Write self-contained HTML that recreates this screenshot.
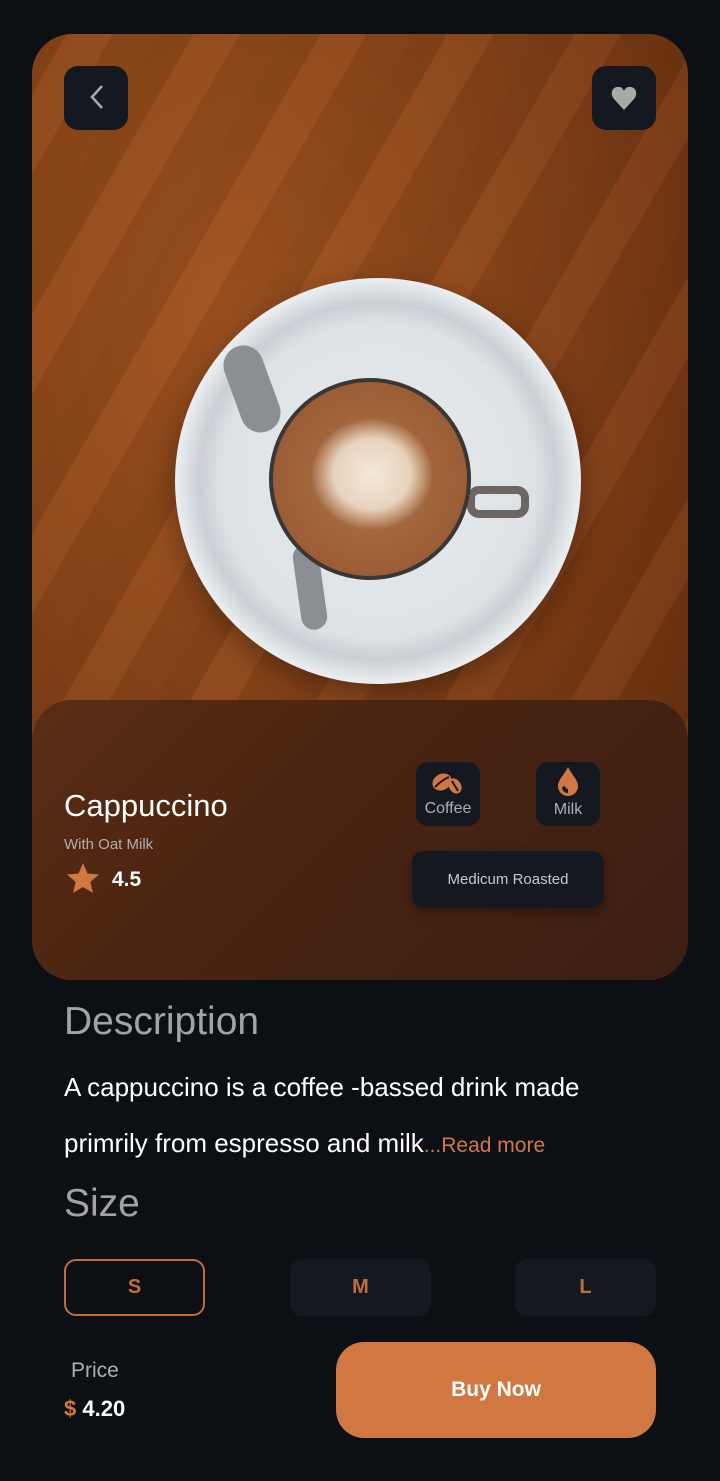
<!DOCTYPE html>
<html><head><meta charset="utf-8"><style>
*{margin:0;padding:0;box-sizing:border-box}
body{width:720px;height:1481px;background:#0c0f14;font-family:"Liberation Sans",sans-serif;position:relative;overflow:hidden;color:#fff}
.hero{position:absolute;left:32px;top:34px;width:656px;height:946px;border-radius:40px;overflow:hidden;
background:radial-gradient(ellipse at 30% 30%,#a0521f 0%,#8a4519 40%,#6e3311 80%,#5a2a10 100%)}
.streak{position:absolute;inset:0;background:repeating-linear-gradient(120deg,rgba(0,0,0,.07) 0 30px,rgba(255,170,110,.05) 30px 70px,rgba(0,0,0,.05) 70px 110px)}
.saucer{position:absolute;left:143px;top:244px;width:406px;height:406px;border-radius:50%;background:radial-gradient(circle at 50% 50%,#e8ecef 0%,#dde2e6 55%,#c9cfd4 62%,#e9edf0 70%,#d4d9dd 100%);box-shadow:0 10px 30px rgba(0,0,0,.35)}
.cup{position:absolute;left:237px;top:344px;width:202px;height:202px;border-radius:50%;background:#3a3633}
.coffee{position:absolute;left:241px;top:348px;width:194px;height:194px;border-radius:50%;background:radial-gradient(circle,#b07449 0%,#9a5d35 70%,#6e3f20 100%)}
.art{position:absolute;left:280px;top:385px;width:120px;height:110px;border-radius:50% 50% 45% 45%;background:radial-gradient(ellipse,#f3e8dc 0%,#e8d3bd 45%,rgba(200,150,110,0) 72%)}
.handle{position:absolute;left:435px;top:452px;width:62px;height:32px;border-radius:12px;border:8px solid #6b6661}
.spoon{position:absolute;background:#8b8f93;border-radius:30px}
.panel{position:absolute;left:0;top:666px;width:656px;height:280px;border-radius:40px;background:linear-gradient(135deg,#5b2d14 0%,#4a2412 40%,#3c1e12 100%)}
.btn{position:absolute;width:64px;height:64px;border-radius:14px;background:#141921;top:32px}
.chip{position:absolute;background:#141921;border-radius:12px;color:#aeaeae;font-size:16px;text-align:center}
.sz{position:absolute;top:1259px;width:141px;height:57px;border-radius:12px;background:#141921;color:#c26c38;font-size:20px;font-weight:bold;text-align:center;line-height:57px}
</style></head><body>
<div class="hero">
<div class="streak"></div>
<div class="saucer"></div>
<div class="spoon" style="left:200px;top:310px;width:40px;height:90px;transform:rotate(-20deg)"></div>
<div class="spoon" style="left:265px;top:510px;width:26px;height:86px;transform:rotate(-8deg)"></div>
<div class="handle"></div>
<div class="cup"></div>
<div class="coffee"></div>
<div class="art"></div>
<div class="btn" style="left:32px"><svg width="64" height="64"><path d="M38 20 L28 31 L38 42" stroke="#a9a9a9" stroke-width="2.5" fill="none"/></svg></div>
<div class="btn" style="left:560px"><svg width="64" height="64"><path d="M32 44 L22 33 C17 27 21 20 27 21 C30 21 31 23 32 25 C33 23 34 21 37 21 C43 20 47 27 42 33 Z" fill="#a9a9a9"/></svg></div>
<div class="panel">
<div style="position:absolute;left:32px;top:88px;font-size:31px">Cappuccino</div>
<div style="position:absolute;left:32px;top:136px;font-size:15px;color:#aeaeae">With Oat Milk</div>
<svg style="position:absolute;left:34px;top:162px" width="34" height="32"><path d="M17 1 L21.5 11.5 L33 12.5 L24.3 20 L27 31 L17 25 L7 31 L9.7 20 L1 12.5 L12.5 11.5Z" fill="#d17842"/></svg>
<div style="position:absolute;left:80px;top:168px;font-size:21px;font-weight:bold">4.5</div>
<div class="chip" style="left:384px;top:62px;width:64px;height:64px"><svg width="40" height="28" style="margin-top:6px"><ellipse cx="14" cy="14" rx="10" ry="8" fill="#d17842" transform="rotate(-30 14 14)"/><path d="M7 19 Q14 12 21 9" stroke="#141921" stroke-width="2" fill="none"/><ellipse cx="27" cy="18" rx="6" ry="8" fill="#d17842" transform="rotate(-30 27 18)"/><path d="M24 13 Q27 18 30 23" stroke="#141921" stroke-width="2" fill="none"/></svg><div style="margin-top:-1px">Coffee</div></div>
<div class="chip" style="left:504px;top:62px;width:64px;height:64px"><svg width="40" height="32" style="margin-top:3px"><path d="M20 2 C16 10 10 15 10 21 A10 10 0 0 0 30 21 C30 15 24 10 20 2Z" fill="#d17842"/><path d="M14 22 A6 6 0 0 0 20 28 L20 24 A3 3 0 0 1 17 21Z" fill="#141921"/></svg><div style="margin-top:-1px">Milk</div></div>
<div class="chip" style="left:380px;top:151px;width:192px;height:57px;line-height:57px;font-size:15px;color:#c8c8c8;box-shadow:0 4px 10px rgba(0,0,0,.3)">Medicum Roasted</div>
</div>
</div>
<div style="position:absolute;left:64px;top:1000px;font-size:39px;color:#a3a3a3">Description</div>
<div style="position:absolute;left:64px;top:1059px;font-size:26px;line-height:56px;width:570px">A cappuccino is a coffee -bassed drink made primrily from espresso and milk<span style="color:#d17842;font-size:21px">...Read more</span></div>
<div style="position:absolute;left:64px;top:1182px;font-size:39px;color:#a3a3a3">Size</div>
<div class="sz" style="left:64px;border:2px solid #c26c38;background:transparent;line-height:53px">S</div>
<div class="sz" style="left:290px">M</div>
<div class="sz" style="left:515px">L</div>
<div style="position:absolute;left:71px;top:1359px;font-size:21px;color:#aeaeae">Price</div>
<div style="position:absolute;left:64px;top:1396px;font-size:22px;font-weight:bold"><span style="color:#d17842">$</span> 4.20</div>
<div style="position:absolute;left:336px;top:1342px;width:320px;height:96px;border-radius:28px;background:#d17842;text-align:center;line-height:96px;font-size:21px;font-weight:bold">Buy Now</div>
</body></html>
